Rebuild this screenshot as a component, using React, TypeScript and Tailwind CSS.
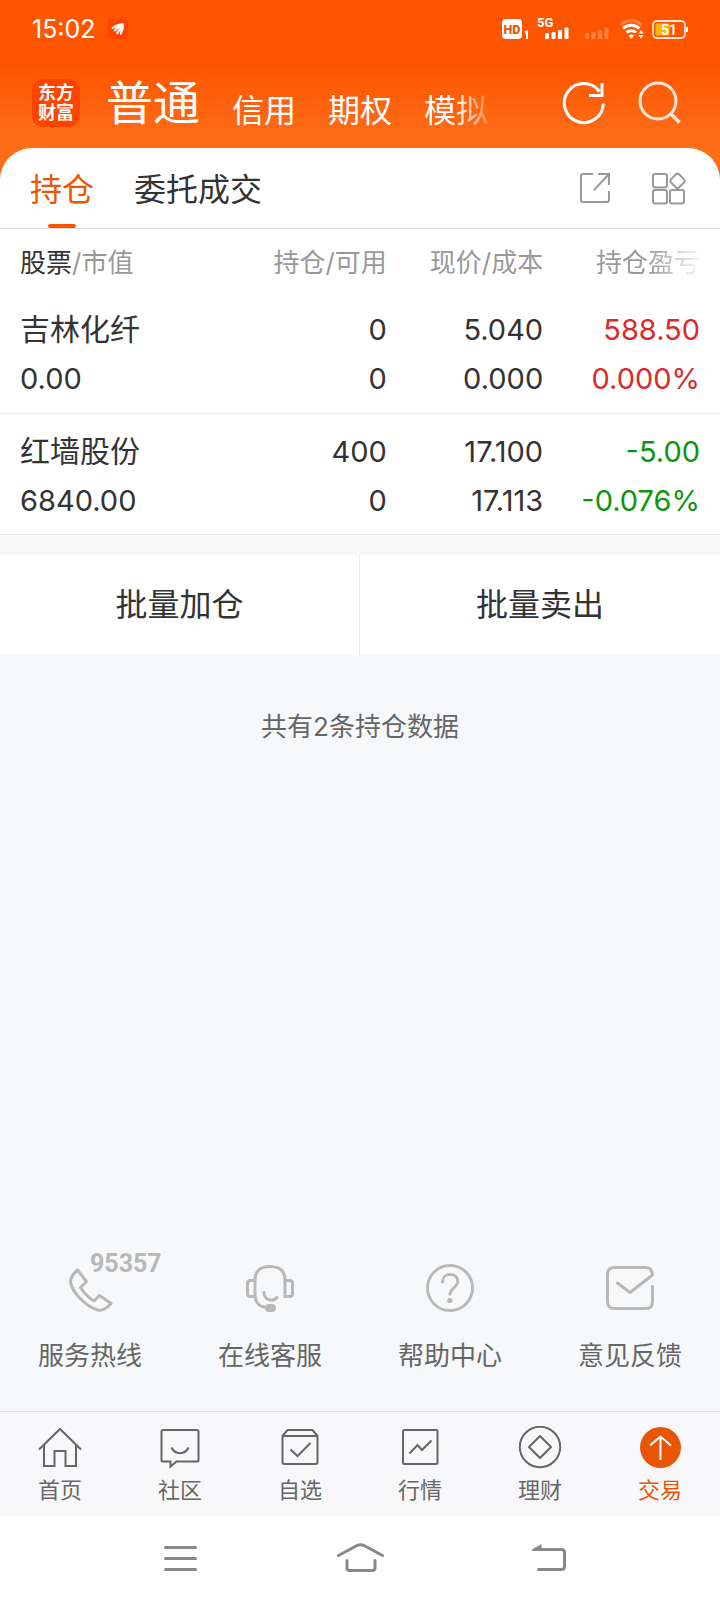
import type { ReactNode } from "react"
import clsx from "clsx"

type Holding = {
  name: string
  value: string
  amount: string
  available: string
  price: string
  cost: string
  profit: string
  rate: string
  up: boolean
}

const holdings: Holding[] = [
  {
    name: "吉林化纤",
    value: "0.00",
    amount: "0",
    available: "0",
    price: "5.040",
    cost: "0.000",
    profit: "588.50",
    rate: "0.000%",
    up: true,
  },
  {
    name: "红墙股份",
    value: "6840.00",
    amount: "400",
    available: "0",
    price: "17.100",
    cost: "17.113",
    profit: "-5.00",
    rate: "-0.076%",
    up: false,
  },
]

function SignalBars({ className }: { className?: string }) {
  return (
    <svg width="24" height="12" viewBox="0 0 24 12" fill="currentColor" className={className}>
      <rect x="0" y="6" width="4" height="6" rx="1" />
      <rect x="6.5" y="5" width="4" height="7" rx="1" />
      <rect x="13" y="3" width="4" height="9" rx="1" />
      <rect x="19.5" y="0.5" width="4" height="11.5" rx="1" />
    </svg>
  )
}

function StatusBar() {
  return (
    <div className="flex h-[58px] items-center justify-between px-8 text-white">
      <div className="flex items-center gap-3">
        <span className="text-[25px] leading-8">15:02</span>
        <span className="flex size-5 items-center justify-center rounded-xs bg-[#ff4400]">
          <svg width="14" height="14" viewBox="0 0 14 14" fill="currentColor">
            <path d="M0.5 5.8 C4 2.600 8 1.200 12.500 1 C13.500 4 12.800 9 9.800 13.200 L8.700 11.600 L9.800 8 L6.500 12.500 L5 11.200 L8.800 5.500 L3.800 9.800 L2.600 8.400 L6 4.800 L1.400 7.200 Z" />
          </svg>
        </span>
      </div>
      <div className="flex items-end font-[Roboto,sans-serif]">
        <svg width="29" height="20" viewBox="0 0 29 20">
          <rect x="0" y="0" width="20" height="20" rx="4" fill="#fff" />
          <text x="10" y="14.500" textAnchor="middle" fontSize="12.500" fontWeight="900" fill="#e8590c">HD</text>
          <path d="M23 13.500 L25 12.500 V20" fill="none" stroke="#fff" strokeWidth="2" />
        </svg>
        <div className="ml-1.5 flex h-5 w-8 flex-col items-end justify-between">
          <span className="self-start text-[13px] leading-2 font-bold">5G</span>
          <SignalBars />
        </div>
        <SignalBars className="ml-4 opacity-25" />
        <svg width="26" height="20" viewBox="0 0 26 20" fill="none" stroke="#fff" strokeWidth="3" className="ml-2.5">
          <path d="M1.5 6 A16 16 0 0 1 23 6" opacity="0.25" />
          <path d="M4 9.5 A12 12 0 0 1 20.5 9.5" />
          <path d="M7.5 13.5 A7 7 0 0 1 17 13.5" />
          <path d="M12.3 20 L9.5 16.6 Q12.3 14.5 15 16.6 Z" fill="#fff" stroke="none" />
          <path d="M22 11 L24.6 14.4 H19.4 Z M22 19.5 L24.6 16 H19.4 Z" fill="#fff" stroke="none" />
        </svg>
        <svg width="37" height="20" viewBox="0 0 37 20" className="ml-1.5">
          <rect x="2" y="2" width="32" height="17" rx="4" fill="none" stroke="#fff" strokeOpacity="0.85" strokeWidth="1.8" />
          <rect x="4.5" y="4.5" width="14" height="12" rx="1.5" fill="#ffb800" />
          <path d="M36 8 V13" stroke="#fff" strokeWidth="2" />
          <text x="18" y="15.500" textAnchor="middle" fontSize="14" fontWeight="600" fill="#fff">51</text>
        </svg>
      </div>
    </div>
  )
}

function AccountHeader() {
  return (
    <div className="flex h-[90px] items-center pr-[38px] pl-8 text-white">
      <div className="flex size-12 shrink-0 flex-col items-center justify-center rounded-xl bg-[#ff4400] text-[18px] leading-5 font-bold">
        <span>东方</span>
        <span>财富</span>
      </div>
      <nav className="ml-[26px] flex flex-1 items-end gap-8 whitespace-nowrap">
        <a href="#normal" className="text-[47px] leading-[56px]">普通</a>
        <a href="#credit" className="text-[32px] leading-10">信用</a>
        <a href="#option" className="text-[32px] leading-10">期权</a>
        <a href="#mock" className="text-[32px] leading-10 [mask-image:linear-gradient(to_right,#000_50%,transparent_115%)]">模拟</a>
      </nav>
      <div className="flex items-center gap-8">
        <button type="button" aria-label="刷新">
          <svg width="44" height="44" viewBox="0 0 44 44" fill="none" stroke="currentColor" strokeWidth="3">
            <path d="M41.3 22.5 A19.5 19.5 0 1 1 37.5 10.5" />
            <path d="M40 2 V14.5 H27" />
          </svg>
        </button>
        <button type="button" aria-label="搜索">
          <svg width="44" height="44" viewBox="0 0 44 44" fill="none" stroke="currentColor" strokeWidth="3" className="opacity-85">
            <circle cx="20" cy="20" r="18" />
            <path d="M32 32 L41.5 41.5" strokeWidth="3.5" />
          </svg>
        </button>
      </div>
    </div>
  )
}

function Tabs() {
  return (
    <div className="flex h-[81px] items-stretch justify-between rounded-t-[32px] border-b border-[#dcdcdc] bg-white pr-[34px] pl-[30px]">
      <div className="flex gap-10 text-[32px]">
        <a href="#holding" className="relative flex items-center pt-1 text-[#ea5504]">
          持仓
          <span className="absolute bottom-0 left-1/2 h-1 w-7 -translate-x-1/2 rounded-full bg-[#ff5500]" />
        </a>
        <a href="#orders" className="flex items-center pt-1 text-[#333333]">委托成交</a>
      </div>
      <div className="flex items-center gap-10 text-[#999999]">
        <button type="button" aria-label="分享">
          <svg width="34" height="34" viewBox="0 0 34 34" fill="none" stroke="currentColor" strokeWidth="2">
            <path d="M15 3 H5 Q3 3 3 5 V29 Q3 31 5 31 H29 Q31 31 31 29 V20" />
            <path d="M20 3 H31 V14 M31 3 L16 19" />
          </svg>
        </button>
        <button type="button" aria-label="更多功能">
          <svg width="34" height="34" viewBox="0 0 34 34" fill="none" stroke="currentColor" strokeWidth="2">
            <rect x="1" y="3" width="14" height="13.5" rx="2" />
            <rect x="1" y="19" width="14" height="13.5" rx="2" />
            <rect x="18" y="19" width="14" height="13.5" rx="2" />
            <path d="M24 3.3 Q25.5 2 27 3.3 L32 8.3 Q33.3 10 32 11.5 L27 16.5 Q25.5 17.8 24 16.5 L19 11.5 Q17.7 10 19 8.3 Z" />
          </svg>
        </button>
      </div>
    </div>
  )
}

function HoldingsTable() {
  return (
    <table className="w-full table-fixed border-collapse bg-white text-[#333333]">
      <thead>
        <tr className="h-[63px] text-right text-[26px] whitespace-nowrap text-[#999999]">
          <th className="w-[31%] pt-1 pl-5 text-left font-normal">
            <span className="text-[#333333]">股票</span>/市值
          </th>
          <th className="w-[23%] pt-1 pr-0.5 font-normal">持仓/可用</th>
          <th className="w-[22%] pt-1 pr-1 font-normal">现价/成本</th>
          <th className="pt-1 pr-5 font-normal">
            <span className="[mask-image:linear-gradient(to_right,#000_50%,transparent_105%)]">持仓盈亏</span>
          </th>
        </tr>
      </thead>
      <tbody>
        {holdings.map((h) => (
          <tr key={h.name} className="h-[121px] border-b border-[#e8e8e8] text-right text-[29px] leading-[49px]">
            <td className="pt-1 pl-5 text-left">
              <div className="text-[30px]">{h.name}</div>
              <div>{h.value}</div>
            </td>
            <td className="pt-1 pr-0.5">
              <div>{h.amount}</div>
              <div>{h.available}</div>
            </td>
            <td className="pt-1 pr-1">
              <div>{h.price}</div>
              <div>{h.cost}</div>
            </td>
            <td className={clsx("pt-1 pr-5", h.up ? "text-[#d92b2b]" : "text-[#0d960d]")}>
              <div>{h.profit}</div>
              <div>{h.rate}</div>
            </td>
          </tr>
        ))}
      </tbody>
    </table>
  )
}

function ServiceLink({ label, children }: { label: string; children: ReactNode }) {
  return (
    <a href="#service" className="flex flex-col items-center gap-[26px] text-[26px] leading-9 text-[#666666]">
      <span className="relative text-[#b8b8b8]">{children}</span>
      {label}
    </a>
  )
}

function Services() {
  return (
    <div className="grid grid-cols-4 pb-[37px]">
      <ServiceLink label="服务热线">
        <svg width="48" height="48" viewBox="0 0 48 48" fill="none" stroke="currentColor" strokeWidth="3" strokeLinejoin="round">
          <path d="M11.5 6 L20.5 17.5 L14.5 23.5 C18 29 22.5 33.5 28 37 L33.5 31.5 L45 39.5 C41 44 36 47 31.5 46 C19 42 6 28 4.5 18 C4.5 13 8 9 11.5 6 Z" />
        </svg>
        <span className="absolute -top-3 left-6 font-[Roboto,sans-serif] text-[25px] leading-6 font-bold">95357</span>
      </ServiceLink>
      <ServiceLink label="在线客服">
        <svg width="48" height="48" viewBox="0 0 48 48" fill="none" stroke="currentColor" strokeWidth="3" strokeLinecap="round" strokeLinejoin="round">
          <path d="M9 32.5 V16 C9 7 14.5 2.5 24 2.5 C33.5 2.5 39 7 39 16 V32.5" />
          <path d="M9 16.5 H4.5 Q1.5 16.5 1.5 19.5 V29.5 Q1.5 32.5 4.5 32.5 H9 C10 39 14 43.5 21 43.5" />
          <path d="M39 16.5 H43.5 Q46.5 16.5 46.5 19.5 V29.5 Q46.5 32.5 43.5 32.5 H39" />
          <path d="M18 28.5 C18.5 37.5 28 37.5 31 33.5" />
          <rect x="20.5" y="41.5" width="8" height="5" rx="2.5" fill="currentColor" />
        </svg>
      </ServiceLink>
      <ServiceLink label="帮助中心">
        <svg width="48" height="48" viewBox="0 0 48 48" fill="none" stroke="currentColor" strokeWidth="2.8">
          <circle cx="24" cy="24" r="22.5" />
          <path d="M16.5 19.5 V18 C16.5 8 31.800 8 31.800 17.500 C31.800 23.500 23.800 24 23.800 31.500" />
          <circle cx="23.8" cy="36.5" r="2.6" fill="currentColor" stroke="none" />
        </svg>
      </ServiceLink>
      <ServiceLink label="意见反馈">
        <svg width="48" height="48" viewBox="0 0 48 48" fill="none" stroke="currentColor" strokeWidth="3" strokeLinecap="round" strokeLinejoin="round">
          <path d="M46.5 22.5 V37.5 Q46.5 44.5 39.5 44.5 H8.5 Q1.5 44.5 1.5 37.5 V10.5 Q1.5 3.5 8.5 3.5 H39.5 Q46 3.5 46.5 11 L24 28.500 L11.5 19" />
        </svg>
      </ServiceLink>
    </div>
  )
}

const navItems: { label: string; active?: boolean; icon: ReactNode }[] = [
  {
    label: "首页",
    icon: (
      <>
        <path d="M1 23.5 L22 3 L43 23.5" />
        <path d="M6 19 V40 H16.5 V25 H27.5 V40 H38 V19" />
      </>
    ),
  },
  {
    label: "社区",
    icon: (
      <>
        <path d="M5 4 H39 Q40.5 4 40.5 5.5 V34 Q40.5 35.5 39 35.5 H18.5 L12.5 40.5 V35.5 H5 Q3.5 35.5 3.5 34 V5.5 Q3.5 4 5 4 Z" />
        <path d="M13.5 21.5 C17 29 27 29 30.5 21.5" />
      </>
    ),
  },
  {
    label: "自选",
    icon: (
      <>
        <path d="M4.5 10 H39.5 V36 Q39.5 38 37.5 38 H6.5 Q4.5 38 4.5 36 Z" />
        <path d="M4.5 10 L9.5 4 H34.5 L39.5 10" />
        <path d="M12.5 23.5 L19.5 30 L32.5 17" />
      </>
    ),
  },
  {
    label: "行情",
    icon: (
      <>
        <rect x="5" y="4" width="34.5" height="34" rx="1.5" />
        <path d="M11.5 27.5 L19.5 19 L24 24 L33.5 14.5" />
      </>
    ),
  },
  {
    label: "理财",
    icon: (
      <>
        <circle cx="22" cy="21" r="20.2" />
        <path d="M22 10 L33 21 L22 32 L11 21 Z" strokeLinejoin="round" />
      </>
    ),
  },
  {
    label: "交易",
    active: true,
    icon: (
      <>
        <circle cx="22.5" cy="21.5" r="20.5" fill="#ea5504" stroke="none" />
        <path d="M22.5 34 V11 M12 19.5 L22.5 10.5 L33 19.5" stroke="#fff" />
      </>
    ),
  },
]

function BottomNav() {
  return (
    <nav className="grid h-[105px] grid-cols-6 border-t border-[#e0e2e4] bg-[#f8f8fa] pt-3.5">
      {navItems.map((item) => (
        <a
          key={item.label}
          href="#nav"
          className={clsx(
            "flex flex-col items-center text-[22px] leading-8",
            item.active ? "text-[#ea5504]" : "text-[#666666]",
          )}
        >
          <svg width="44" height="44" viewBox="0 0 44 44" fill="none" stroke="currentColor" strokeWidth="2" className="mb-1 shrink-0">
            {item.icon}
          </svg>
          {item.label}
        </a>
      ))}
    </nav>
  )
}

function SystemNav() {
  return (
    <div className="grid h-[84px] grid-cols-3 place-items-center bg-white px-[90px] text-[#888888]">
      <button type="button" aria-label="菜单">
        <svg width="36" height="32" viewBox="0 0 36 32" fill="none" stroke="currentColor" strokeWidth="3" strokeLinecap="round">
          <path d="M3.5 5.5 H33.5 M3.5 16.5 H33.5 M3.5 27.5 H33.5" />
        </svg>
      </button>
      <button type="button" aria-label="主屏幕">
        <svg width="48" height="32" viewBox="0 0 48 32" fill="none" stroke="currentColor" strokeWidth="3" strokeLinecap="round">
          <path d="M2.5 13.5 L21 3.5 Q24.500 1.800 28 3.5 L46.5 13.5" />
          <path d="M11 18.5 V26 Q11 28.5 13.500 28.5 H36.500 Q39 28.5 39 26 V18.5" />
        </svg>
      </button>
      <button type="button" aria-label="返回">
        <svg width="52" height="32" viewBox="0 0 52 32" fill="none" stroke="currentColor" strokeWidth="3" strokeLinecap="round">
          <path d="M22 7.5 H47.500 Q50.500 7.5 50.500 10.5 V24.500 Q50.500 27.500 47.500 27.500 H24.500" />
          <path d="M18 9 V7.500 L27.500 2 V9 Z" fill="currentColor" stroke="none" />
        </svg>
      </button>
    </div>
  )
}

export default function App() {
  return (
    <div className="flex min-h-screen flex-col bg-[#f7f8fa] font-[Inter,'Noto_Sans_CJK_SC',sans-serif]">
      <header className="bg-[#ff6d17]">
        <div className="bg-linear-to-b from-[#ff5500] from-45% to-[#ff6d17] to-95%">
          <StatusBar />
          <AccountHeader />
        </div>
        <Tabs />
      </header>

      <main className="flex flex-1 flex-col">
        <HoldingsTable />
        <div className="mt-5 grid h-[100px] grid-cols-2 bg-white text-[32px] text-[#333333]">
          <button type="button" className="border-r border-[#e8e8e8]">批量加仓</button>
          <button type="button">批量卖出</button>
        </div>
        <p className="mt-[54px] flex-1 text-center text-[26px] leading-9 text-[#666666]">共有2条持仓数据</p>
        <Services />
      </main>

      <BottomNav />
      <SystemNav />
    </div>
  )
}
